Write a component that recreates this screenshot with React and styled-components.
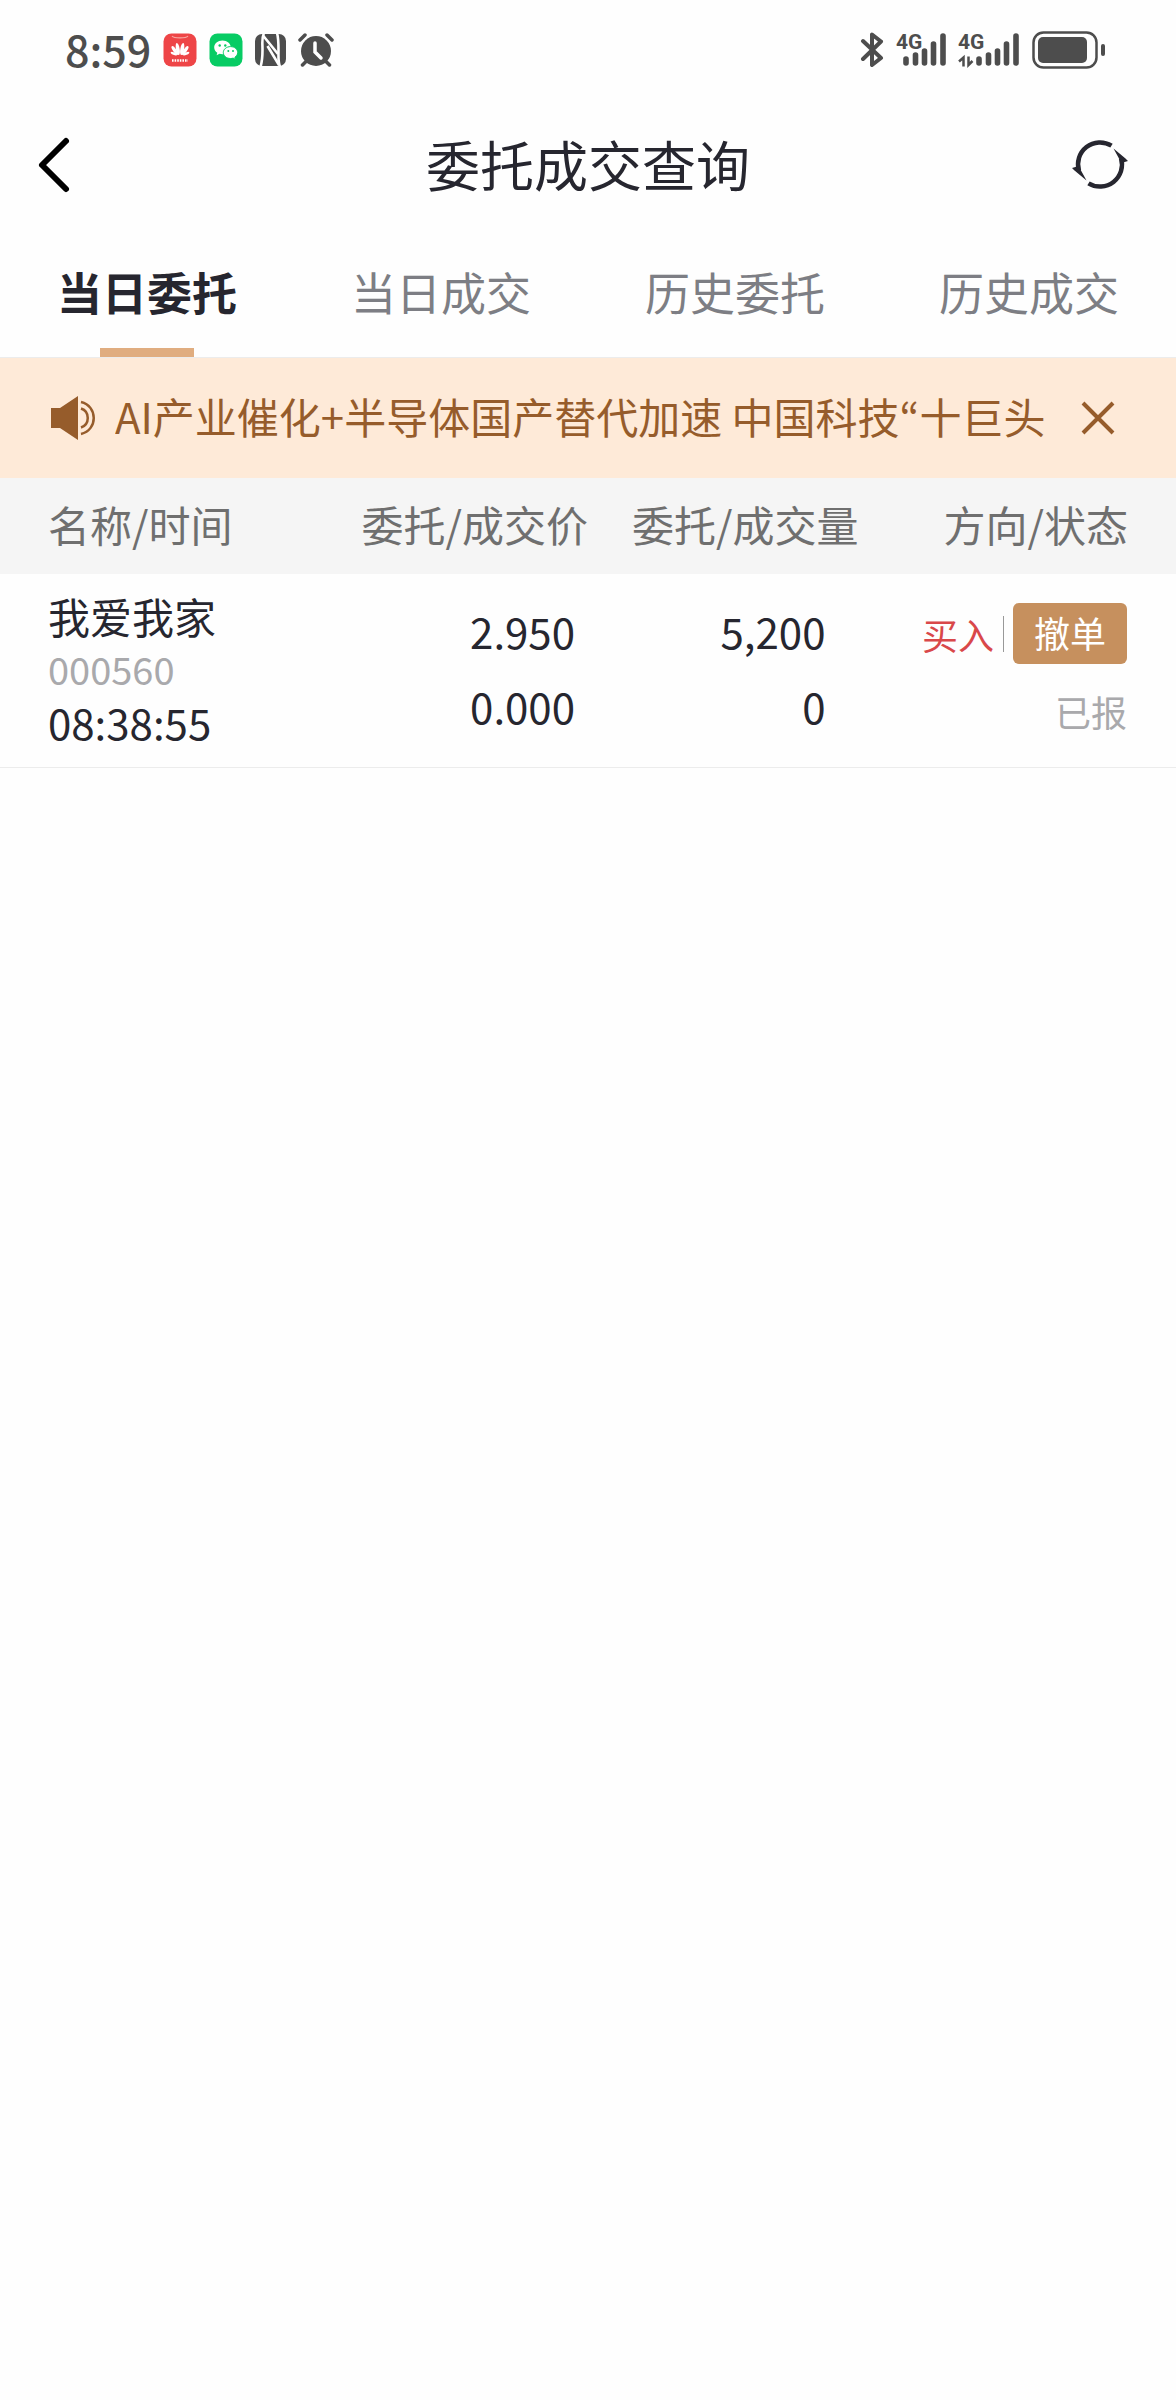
import React, { Component } from "react";
import styled, { createGlobalStyle } from "styled-components";

const tabs = ["当日委托", "当日成交", "历史委托", "历史成交"];

const orders = [
  {
    name: "我爱我家",
    code: "000560",
    time: "08:38:55",
    price: "2.950",
    dealPrice: "0.000",
    amount: "5,200",
    dealAmount: "0",
    side: "买入",
    status: "已报"
  }
];

const AppGalleryIcon = () => (
  <svg width="34" height="34" viewBox="0 0 34 34">
    <rect x="0.5" y="0.5" width="33" height="33" rx="8" fill="#ee4547" />
    <path d="M9 3c2 2.6 14 2.6 16 0" fill="none" stroke="#f7a9a4" strokeWidth="1.2" />
    <g fill="#fff">
      <ellipse cx="14.8" cy="16" rx="1.9" ry="6" transform="rotate(-10 14.8 16)" />
      <ellipse cx="19.2" cy="16" rx="1.9" ry="6" transform="rotate(10 19.2 16)" />
      <ellipse cx="11.8" cy="17.5" rx="1.7" ry="5.2" transform="rotate(-35 11.8 17.5)" />
      <ellipse cx="22.2" cy="17.5" rx="1.7" ry="5.2" transform="rotate(35 22.2 17.5)" />
      <ellipse cx="10.8" cy="20.6" rx="1.3" ry="3.4" transform="rotate(-65 10.8 20.6)" />
      <ellipse cx="23.2" cy="20.6" rx="1.3" ry="3.4" transform="rotate(65 23.2 20.6)" />
    </g>
    <path d="M9 27.5h16" stroke="#fff" strokeWidth="2.4" strokeDasharray="1.6 1" />
  </svg>
);

const WechatIcon = () => (
  <svg width="34" height="34" viewBox="0 0 34 34">
    <rect x="0.5" y="0.5" width="33" height="33" rx="8" fill="#07cc64" />
    <path d="M13.5 7.5c-4.7 0-8.3 3-8.3 6.9 0 2.2 1.2 4.1 3.1 5.4l-.7 2.5 2.9-1.5c1 .3 2 .4 3 .4 4.6 0 8.3-3.1 8.3-6.800 0-3.900-3.700-6.900-8.300-6.900z" fill="#fff" />
    <path d="M21.6 13.6c-4.2 0-7.3 2.7-7.3 6s3.1 5.9 7.3 5.9c.9 0 1.7-.1 2.5-.4l2.4 1.3-.6-2.2c1.7-1.1 2.8-2.7 2.8-4.6 0-3.3-3.1-6-7.1-6z" fill="#fff" stroke="#07cc64" strokeWidth="1" />
    <g fill="#07cc64">
      <circle cx="10.7" cy="12.5" r="1.2" />
      <circle cx="16.3" cy="12.5" r="1.2" />
      <circle cx="19.3" cy="18" r="1" />
      <circle cx="24" cy="18" r="1" />
    </g>
  </svg>
);

const NfcIcon = () => (
  <svg width="31" height="34" viewBox="0 0 31 34">
    <rect y="1" width="31" height="32" rx="7" fill="#4d4d4d" />
    <g fill="none" stroke="#fff" strokeWidth="2.6">
      <path d="M9 0C6.500 5 7.500 9 7.500 17S7 29 5.500 34" />
      <path d="M22 0C23.500 5 23.500 9 23.500 17s-.5 12 1.500 17" />
      <path d="M8 2.500L23 21M12.500 13L24 32" />
    </g>
  </svg>
);

const AlarmIcon = () => (
  <svg width="36" height="34" viewBox="0 0 36 34">
    <circle cx="18" cy="18" r="15" fill="#4d4d4d" />
    <path d="M2 7l5-5M34 7l-5-5M4.500 32l4-4M31.500 32l-4-4" stroke="#4d4d4d" strokeWidth="3.5" strokeLinecap="round" />
    <path d="M17 10v9l6 6" fill="none" stroke="#fff" strokeWidth="3.5" strokeLinecap="round" />
  </svg>
);

const BluetoothIcon = () => (
  <svg width="24" height="36" viewBox="0 0 24 36">
    <path d="M3 9l18 17-9 7V22M3 27L21 9.500 12 2.500V14" fill="none" stroke="#4d4d4d" strokeWidth="4" strokeLinecap="round" strokeLinejoin="round" />
  </svg>
);

const SignalIcon = ({ data }) => (
  <SignalSvg width={data ? 62 : 50} height="36">
    <text x="0" y="17">4G</text>
    <path
      d="M10 27v4M19.500 23v8M28.500 19v12M37.500 12v19M47 4v27"
      transform={data ? "translate(11 0)" : undefined}
      strokeWidth="5.6"
      strokeLinecap="round"
    />
    {data && <path d="M1 29.500l4.500-4v9M10.500 24.500v8.500l4-4" strokeWidth="2.5" />}
  </SignalSvg>
);

const BatteryIcon = () => (
  <svg width="74" height="38" viewBox="0 0 74 38">
    <rect x="1.5" y="1.5" width="63" height="35" rx="10" fill="none" stroke="#4d4d4d" strokeWidth="2.5" />
    <rect x="6" y="6" width="49" height="26" rx="5" fill="#4d4d4d" />
    <rect x="69" y="13" width="4" height="12" rx="2" fill="#4d4d4d" />
  </svg>
);

const BackIcon = () => (
  <svg width="36" height="58" viewBox="0 0 36 58">
    <path d="M30 5L6 29l24 24" fill="none" stroke="#000" strokeWidth="6" strokeLinecap="round" strokeLinejoin="round" />
  </svg>
);

const RefreshIcon = () => (
  <svg width="69" height="52" viewBox="0 0 69 52">
    <g fill="none" stroke="#26262f" strokeWidth="4.5">
      <path d="M40.500 6.700A22 22 0 0 0 8 32" />
      <path d="M17.500 44.300A22 22 0 0 0 50 19" />
    </g>
    <path d="M1 29l5-1.500 4 4 5.500 10-12-10zM57 22l-5 1.500-4-4-5.500-10 12 10z" fill="#26262f" />
  </svg>
);

const SpeakerIcon = () => (
  <svg width="46" height="46" viewBox="0 0 46 46">
    <path d="M1 13h9L28 1v44L10 33H1z" fill="#965c2b" />
    <path d="M31 7c17 4 17 28 0 32M31 13.500c9 3 9 16 0 19" fill="none" stroke="#965c2b" strokeWidth="2.5" />
  </svg>
);

const CloseIcon = () => (
  <svg width="36" height="36" viewBox="0 0 36 36">
    <path d="M3 3l30 30M33 3L3 33" stroke="#965c2b" strokeWidth="4" />
  </svg>
);

class App extends Component {
  state = { active: 0, notice: true };

  select = index => {
    this.setState({ active: index });
  };

  closeNotice = () => {
    this.setState({ notice: false });
  };

  render() {
    const { active, notice } = this.state;
    return (
      <Page>
        <GlobalStyle />
        <StatusBar>
          <StatusGroup>
            <Clock>8:59</Clock>
            <AppGalleryIcon />
            <WechatIcon />
            <NfcIcon />
            <AlarmIcon />
          </StatusGroup>
          <StatusGroup>
            <BluetoothIcon />
            <SignalIcon />
            <SignalIcon data />
            <BatteryIcon />
          </StatusGroup>
        </StatusBar>
        <Header>
          <IconButton aria-label="返回"><BackIcon /></IconButton>
          <Title>委托成交查询</Title>
          <IconButton aria-label="刷新"><RefreshIcon /></IconButton>
        </Header>
        <Tabs>
          {tabs.map((tab, index) => (
            <Tab key={tab} $active={index === active} onClick={() => this.select(index)}>
              {tab}
            </Tab>
          ))}
        </Tabs>
        {notice && (
          <Notice>
            <SpeakerIcon />
            <NoticeText>
              AI产业催化+半导体国产替代加速 中国科技<Quote>“</Quote>十巨头
            </NoticeText>
            <IconButton aria-label="关闭" onClick={this.closeNotice}><CloseIcon /></IconButton>
          </Notice>
        )}
        <Table>
          <thead>
            <tr>
              <HeadCell $width="25%">名称/时间</HeadCell>
              <HeadCell $width="25%">委托/成交价</HeadCell>
              <HeadCell $width="23%">委托/成交量</HeadCell>
              <HeadCell $width="27%">方向/状态</HeadCell>
            </tr>
          </thead>
          <tbody>
            {orders.map(order => (
              <tr key={order.time}>
                <NameCell>
                  <Line>{order.name}</Line>
                  <Line $code>{order.code}</Line>
                  <Line>{order.time}</Line>
                </NameCell>
                <NumberCell $right="13px">
                  <Value>{order.price}</Value>
                  <Value>{order.dealPrice}</Value>
                </NumberCell>
                <NumberCell $right="33px">
                  <Value>{order.amount}</Value>
                  <Value>{order.dealAmount}</Value>
                </NumberCell>
                <ActionCell>
                  <Actions>
                    <Side>{order.side}</Side>
                    <CancelButton>撤单</CancelButton>
                  </Actions>
                  <Status>{order.status}</Status>
                </ActionCell>
              </tr>
            ))}
          </tbody>
        </Table>
      </Page>
    );
  }
}

export default App;

const GlobalStyle = createGlobalStyle`
  * {
    box-sizing: border-box;
  }
  body {
    margin: 0;
    background: #fefefe;
    color: #26262f;
    font-family: "Noto Sans CJK SC", sans-serif;
    font-size: 42px;
  }
  button {
    border: 0;
    padding: 0;
    background: none;
    color: inherit;
    font: inherit;
    cursor: pointer;
  }
  svg {
    display: block;
    flex: none;
  }
`;

const Page = styled.div`
  min-height: 100vh;
`;

const StatusBar = styled.div`
  display: flex;
  align-items: center;
  justify-content: space-between;
  height: 100px;
  padding: 0 70px 0 65px;
`;

const StatusGroup = styled.div`
  display: flex;
  align-items: center;
  gap: 12px;
`;

const Clock = styled.span`
  padding-bottom: 5px;
  color: #4d4d4d;
  font-size: 43px;
  font-weight: 500;
  line-height: 64px;
`;

const SignalSvg = styled.svg`
  overflow: visible;

  text {
    fill: #4d4d4d;
    font-family: Roboto, sans-serif;
    font-size: 21px;
    font-weight: 700;
  }
  path {
    fill: none;
    stroke: #4d4d4d;
  }
`;

const Header = styled.header`
  display: grid;
  grid-template-columns: 1fr auto 1fr;
  align-items: center;
  height: 130px;
  padding: 0 36px;
`;

const Title = styled.h1`
  margin: 0;
  padding-bottom: 3px;
  font-size: 54px;
  font-weight: 400;
  line-height: 80px;
`;

const IconButton = styled.button`
  flex: none;
  justify-self: start;

  &:last-child {
    justify-self: end;
  }
`;

const Tabs = styled.nav`
  display: flex;
  height: 128px;
  border-bottom: 1px solid #ececec;
`;

const Tab = styled.button`
  flex: 1;
  display: flex;
  flex-direction: column;
  align-items: center;
  justify-content: space-between;
  padding-top: 30px;
  font-size: 45px;
  line-height: 64px;
  font-weight: ${props => props.$active ? 700 : 400};
  color: ${props => props.$active ? "#26262f" : "#7d7e84"};

  &::after {
    content: "";
    width: 94px;
    height: 9px;
    background: ${props => props.$active ? "#e0ad80" : "transparent"};
  }
`;

const Notice = styled.div`
  display: flex;
  align-items: center;
  height: 120px;
  padding: 0 60px 0 50px;
  background: #feead8;
  color: #965c2b;
`;

const NoticeText = styled.div`
  flex: 1;
  min-width: 0;
  margin: 0 24px 0 19px;
  padding-bottom: 4px;
  overflow: hidden;
  white-space: nowrap;
  line-height: 64px;
`;

const Quote = styled.span`
  font-family: "Noto Sans CJK KR", sans-serif;
`;

const Table = styled.table`
  width: 100%;
  table-layout: fixed;
  border-collapse: collapse;
`;

const HeadCell = styled.th`
  width: ${props => props.$width};
  height: 96px;
  padding: 0 0 4px;
  background: #f5f5f5;
  color: #6f6f6f;
  font-weight: 400;
  line-height: 60px;
  text-align: right;
  white-space: nowrap;

  &:first-child {
    padding-left: 48px;
    text-align: left;
  }
  &:last-child {
    padding-right: 48px;
  }
`;

const Cell = styled.td`
  padding: 0;
  border-bottom: 1px solid #ececec;
  vertical-align: top;
`;

const NameCell = styled(Cell)`
  padding: 15px 0 19px 48px;
`;

const Line = styled.div`
  line-height: 53px;
  font-size: ${props => props.$code ? "38px" : "42px"};
  color: ${props => props.$code ? "#a9a9ac" : "#26262f"};
`;

const NumberCell = styled(Cell)`
  padding: 19px ${props => props.$right} 0 0;
  text-align: right;
`;

const Value = styled.div`
  line-height: 75px;
`;

const ActionCell = styled(Cell)`
  padding: 29px 49px 0 0;
  font-size: 36px;
`;

const Actions = styled.div`
  display: flex;
  align-items: center;
  justify-content: flex-end;
`;

const Side = styled.span`
  margin-right: 9px;
  padding-right: 9px;
  border-right: 1px solid #999;
  color: #d9484a;
  line-height: 36px;
`;

const CancelButton = styled.button`
  width: 114px;
  height: 61px;
  padding-bottom: 3px;
  border-radius: 6px;
  background: #c6905e;
  color: #fff;
  line-height: 58px;
`;

const Status = styled.div`
  margin-top: 22px;
  color: #a9a9ac;
  line-height: 50px;
  text-align: right;
`;
